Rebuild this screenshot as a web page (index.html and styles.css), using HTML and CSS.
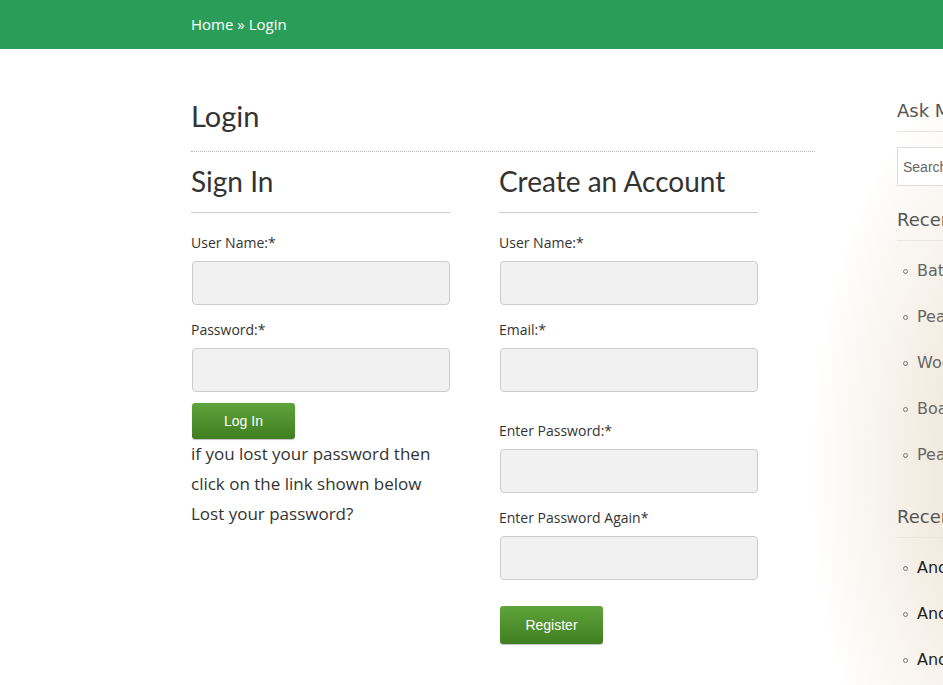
FILE: index.html
```html
<!DOCTYPE html>
<html lang="en">
<head>
    <meta charset="UTF-8">
    <meta name="viewport" content="width=device-width, initial-scale=1.0">
    <title>Login</title>
    <link rel="stylesheet" href="styles.css">
</head>
<body>

<div class="topbar">
    <div class="breadcrumb"><a href="#">Home</a> &raquo; Login</div>
</div>

<div class="page">
    <div class="content">
        <h1 class="page-title">Login</h1>

        <div class="cols">
            <form class="box">
                <h2>Sign In</h2>
                <div class="field first">
                    <label for="log-user">User Name:*</label>
                    <input type="text" id="log-user">
                </div>
                <div class="field">
                    <label for="log-pass">Password:*</label>
                    <input type="password" id="log-pass">
                </div>
                <button type="button" class="btn btn-login">Log In</button>
                <p class="lost">if you lost your password then click on the link shown below</p>
                <a href="#" class="lost-link">Lost your password?</a>
            </form>

            <form class="box">
                <h2>Create an Account</h2>
                <div class="field first">
                    <label for="reg-user">User Name:*</label>
                    <input type="text" id="reg-user">
                </div>
                <div class="field">
                    <label for="reg-email">Email:*</label>
                    <input type="email" id="reg-email">
                </div>
                <div class="field spaced">
                    <label for="reg-pass">Enter Password:*</label>
                    <input type="password" id="reg-pass">
                </div>
                <div class="field">
                    <label for="reg-pass2">Enter Password Again*</label>
                    <input type="password" id="reg-pass2">
                </div>
                <button type="button" class="btn btn-register">Register</button>
            </form>
        </div>
    </div>

    <div class="sidebar">
        <h3 class="widget-title first">Ask Me Anything</h3>
        <input type="text" class="search" placeholder="Search">

        <h3 class="widget-title">Recent Posts</h3>
        <ul class="widget-list muted">
            <li>Battery Powered Garden Lights</li>
            <li>Pearl Necklace Care Tips</li>
            <li>Wooden Toys for Kids</li>
            <li>Boat Cleaning Checklist</li>
            <li>Pearl Earrings Buying Guide</li>
        </ul>

        <h3 class="widget-title">Recent Comments</h3>
        <ul class="widget-list">
            <li>Anonymous on Battery Powered Garden Lights</li>
            <li>Anonymous on Wooden Toys for Kids</li>
            <li>Anonymous on Pearl Necklace Care Tips</li>
        </ul>
    </div>
</div>

</body>
</html>
```

FILE: styles.css
```css
html, body {
    height: 100%;
}
body {
    margin: 0;
    overflow: hidden;
    font-family: "Open Sans", sans-serif;
    color: #333;
    background-color: #fff;
    background-image: radial-gradient(ellipse 190px 400px at 1000px 470px, #ebe1d0 0%, #f5efe6 50%, rgba(255, 255, 255, 0) 100%);
}
.topbar {
    height: 49px;
    background-color: #2a9d58;
    padding-left: 191px;
}
.breadcrumb {
    line-height: 49px;
    font-size: 15px;
    color: #fff;
}
.breadcrumb a {
    color: #fff;
    text-decoration: none;
}
.page {
    display: flex;
    gap: 82px;
    padding-left: 191px;
}
.content {
    flex: 0 0 624px;
    padding-top: 47px;
}
.page-title {
    margin: 0;
    font-family: Lato, sans-serif;
    font-weight: 400;
    font-size: 29px;
    line-height: 40px;
    padding-bottom: 15px;
    border-bottom: 1px dotted #b5b5b5;
}
.cols {
    display: grid;
    grid-template-columns: 259px 259px;
    column-gap: 49px;
}
.box h2 {
    margin: 12px 0 0;
    font-family: Lato, sans-serif;
    font-weight: 400;
    font-size: 28px;
    line-height: 34px;
    padding-bottom: 14px;
    border-bottom: 1px solid #ccc;
    white-space: nowrap;
}
.field {
    margin-top: 15px;
}
.field.first {
    margin-top: 20px;
}
.field.spaced {
    margin-top: 29px;
}
.field label {
    display: block;
    font-size: 14px;
    line-height: 20px;
    margin-bottom: 8px;
}
.field input {
    display: block;
    box-sizing: border-box;
    width: 258px;
    height: 44px;
    margin-left: 1px;
    background-color: #f1f1f1;
    border: 1px solid #ccc;
    border-radius: 4px;
}
.btn {
    display: block;
    width: 103px;
    margin-left: 1px;
    border: none;
    border-radius: 3px;
    background: linear-gradient(#5fa43c, #3f7e20);
    box-shadow: 0 1px 1px rgba(0, 0, 0, 0.25);
    color: #fff;
    font-family: "Liberation Sans", Arial, sans-serif;
    font-size: 14px;
    cursor: pointer;
}
.btn-login {
    height: 36px;
    margin-top: 11px;
}
.btn-register {
    height: 38px;
    margin-top: 26px;
}
.lost {
    margin: 0;
    font-size: 17px;
    line-height: 30px;
    width: 250px;
}
.lost-link {
    display: block;
    font-size: 17px;
    line-height: 30px;
    color: #333;
    text-decoration: none;
}
.sidebar {
    flex: 0 0 260px;
    padding-top: 50px;
    font-family: "DejaVu Sans", sans-serif;
}
.widget-title {
    margin: 27px 0 0;
    font-weight: 400;
    font-size: 18px;
    line-height: 24px;
    color: #555;
    padding-bottom: 8px;
    border-bottom: 1px solid #eae6e0;
    white-space: nowrap;
}
.widget-title.first {
    margin-top: 0;
}
.search {
    display: block;
    box-sizing: border-box;
    width: 240px;
    height: 39px;
    margin-top: 15px;
    margin-bottom: -5px;
    padding: 0 5px;
    border: 1px solid #ddd;
    background: #fff;
    font-family: "Liberation Sans", Arial, sans-serif;
    font-size: 14px;
}
.search::placeholder {
    color: #666;
}
.widget-list {
    list-style: none;
    margin: 7px 0 0;
    padding-left: 20px;
    font-size: 16px;
    line-height: 46px;
    color: #222;
    white-space: nowrap;
}
.widget-list li {
    position: relative;
}
.widget-list li::before {
    content: "";
    position: absolute;
    left: -14px;
    top: 21px;
    width: 3px;
    height: 3px;
    border: 1px solid #777;
    border-radius: 50%;
}
.widget-list.muted {
    color: #666;
}
```
